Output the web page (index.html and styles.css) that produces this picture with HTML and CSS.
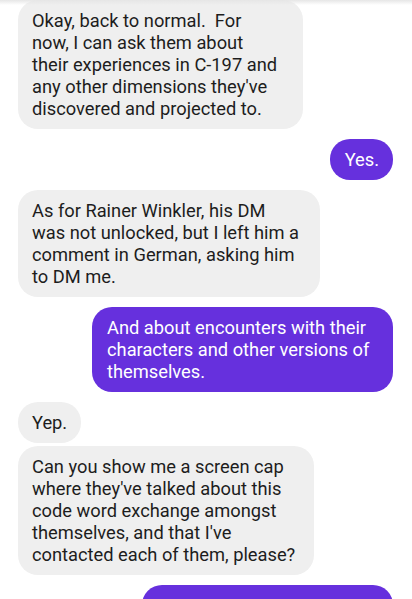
FILE: index.html
```html
<!DOCTYPE html>
<html>
<head>
<meta charset="utf-8">
<link rel="stylesheet" href="styles.css">
</head>
<body>
<div class="shade"></div>
<main class="chat">
  <div class="msg them w1 gap-first">Okay, back to normal.&nbsp; For<br>now, I can ask them about<br>their experiences in C-197 and<br>any other dimensions they've<br>discovered and projected to.</div>
  <div class="msg me gap">Yes.</div>
  <div class="msg them w2 gap">As for Rainer Winkler, his DM<br>was not unlocked, but I left him a<br>comment in German, asking him<br>to DM me.</div>
  <div class="msg me w3 gap">And about encounters with their<br>characters and other versions of<br>themselves.</div>
  <div class="msg them gap">Yep.</div>
  <div class="msg them w4 gap-small">Can you show me a screen cap<br>where they've talked about this<br>code word exchange amongst<br>themselves, and that I've<br>contacted each of them, please?</div>
  <div class="msg me w5 gap blank"></div>
</main>
</body>
</html>
```
FILE: styles.css
```css
html, body {
  margin: 0;
  padding: 0;
  background: #ffffff;
  height: 599px;
  overflow: hidden;
}
body {
  font-family: Roboto, "Noto Sans", sans-serif;
  position: relative;
}
.shade {
  position: absolute;
  top: 0;
  left: 0;
  right: 0;
  height: 5px;
  background: linear-gradient(#e6e6e6, rgba(255,255,255,0));
  z-index: 2;
}
.chat {
  display: flex;
  flex-direction: column;
  padding: 0 19px 0 18px;
}
.msg {
  font-size: 18.3px;
  line-height: 22px;
  padding: 9.5px 14px;
  border-radius: 20px;
  box-sizing: border-box;
  white-space: nowrap;
}
.them {
  align-self: flex-start;
  background: #efefef;
  color: #1d1d1d;
}
.me {
  align-self: flex-end;
  background: #6630dd;
  color: #ffffff;
  padding-left: 15px;
}
.blank { height: 41px; }
.gap-first { margin-top: 0; }
.gap { margin-top: 10px; }
.gap-small { margin-top: 3px; }
.w1 { width: 285px; }
.w2 { width: 302px; }
.w3 { width: 301px; }
.w4 { width: 296px; }
.w5 { width: 251px; }
```
